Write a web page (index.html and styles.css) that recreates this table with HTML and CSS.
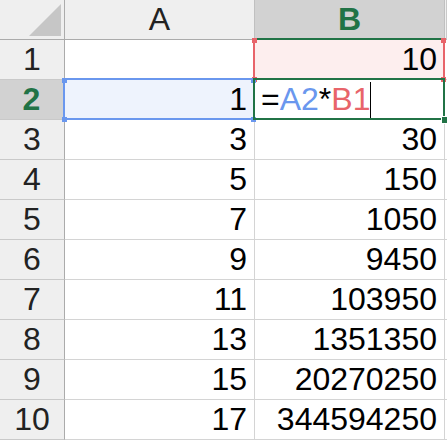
FILE: index.html
```html
<!DOCTYPE html>
<html>
<head>
<meta charset="utf-8">
<link rel="stylesheet" href="styles.css">
</head>
<body>
<div class="sheet">
  <div class="hd corner"><div class="tri"></div></div>
  <div class="hd colhead">A</div>
  <div class="hd colhead sel">B</div>
  <div class="hd extra"></div>

  <div class="hd rowhead">1</div>
  <div class="cell"></div>
  <div class="cell num ref-red">10<span class="h tl"></span><span class="h tr"></span><span class="h bl"></span><span class="h br"></span></div>
  <div class="cell extra"></div>

  <div class="hd rowhead sel">2</div>
  <div class="cell num ref-blue">1<span class="h tl"></span><span class="h tr"></span><span class="h bl"></span><span class="h br"></span></div>
  <div class="cell edit"><span class="formula">=<span class="c-blue">A2</span>*<span class="c-red">B1</span></span><span class="caret"></span><span class="fill-handle"></span></div>
  <div class="cell extra"></div>

  <div class="hd rowhead">3</div><div class="cell num">3</div><div class="cell num">30</div><div class="cell extra"></div>
  <div class="hd rowhead">4</div><div class="cell num">5</div><div class="cell num">150</div><div class="cell extra"></div>
  <div class="hd rowhead">5</div><div class="cell num">7</div><div class="cell num">1050</div><div class="cell extra"></div>
  <div class="hd rowhead">6</div><div class="cell num">9</div><div class="cell num">9450</div><div class="cell extra"></div>
  <div class="hd rowhead">7</div><div class="cell num">11</div><div class="cell num">103950</div><div class="cell extra"></div>
  <div class="hd rowhead">8</div><div class="cell num">13</div><div class="cell num">1351350</div><div class="cell extra"></div>
  <div class="hd rowhead">9</div><div class="cell num">15</div><div class="cell num">20270250</div><div class="cell extra"></div>
  <div class="hd rowhead">10</div><div class="cell num">17</div><div class="cell num">344594250</div><div class="cell extra"></div>
</div>
</body>
</html>
```

FILE: styles.css
```css
* { box-sizing: border-box; }
html, body { margin: 0; padding: 0; background: #ffffff; }
body { width: 447px; height: 441px; overflow: hidden; }

.sheet {
  display: grid;
  grid-template-columns: 65px 190px 190px 2px;
  grid-template-rows: repeat(11, 40px);
  font-family: "Liberation Sans", Arial, sans-serif;
  font-size: 32px;
  color: #000;
  position: relative;
}

.hd {
  background: #efefef;
  color: #222222;
  text-align: center;
  line-height: 39px;
  border-right: 1px solid #c9c9c9;
  border-bottom: 1px solid #c9c9c9;
}
.corner, .colhead, .extra.hd { border-bottom-color: #ababab; }
.corner, .rowhead { border-right-color: #ababab; }
.colhead { border-right-color: #c0c0c0; }

.corner { position: relative; }
.tri {
  position: absolute;
  right: 3px;
  bottom: 3px;
  width: 32px;
  height: 32px;
  background: #c6c6c6;
  clip-path: polygon(100% 0, 100% 100%, 0 100%);
}

.hd.sel {
  background: #d2d2d2;
  color: #217346;
  font-weight: bold;
}
.colhead.sel { border-bottom: 2px solid #217346; line-height: 38px; }
.rowhead.sel { border-right: 2px solid #217346; }

.cell {
  border-right: 1px solid #d4d4d4;
  border-bottom: 1px solid #d4d4d4;
  line-height: 39px;
  position: relative;
  white-space: nowrap;
}
.cell.extra { border-right: none; }
.num { text-align: right; padding-right: 7px; }

.ref-red { background: #fdeeee; }
.ref-red::after {
  content: "";
  position: absolute;
  left: -2px; right: -1px; top: -1px; bottom: -1px;
  border: 2px solid #e8646a;
  border-top: none;
}
.ref-blue { background: #eef3fd; }
.ref-blue::after {
  content: "";
  position: absolute;
  left: -2px; right: -1px; top: -2px; bottom: -1px;
  border: 2px solid #6a97ee;
}

.h {
  position: absolute;
  width: 5px;
  height: 5px;
  z-index: 2;
}
.ref-red .h { background: #e8646a; }
.ref-blue .h { background: #6a97ee; }
.h.tl { left: -3px; top: -2px; }
.h.tr { right: -2px; top: -2px; }
.h.bl { left: -3px; bottom: -3px; }
.h.br { right: -2px; bottom: -3px; }

.edit {
  display: flex;
  align-items: stretch;
  padding-left: 6px;
  z-index: 3;
}
.edit::after {
  content: "";
  position: absolute;
  left: -2px; right: -1px; top: -2px; bottom: -1px;
  border: 2px solid #217346;
}
.formula { line-height: 39px; }
.c-blue { color: #6a97ee; }
.c-red { color: #e8646a; }
.caret {
  width: 1px;
  background: #000;
  margin: 2px 0 1px 0;
}
.fill-handle {
  position: absolute;
  right: -4px;
  bottom: -4px;
  width: 6px;
  height: 6px;
  background: #217346;
  outline: 1px solid #ffffff;
  z-index: 4;
}
```
